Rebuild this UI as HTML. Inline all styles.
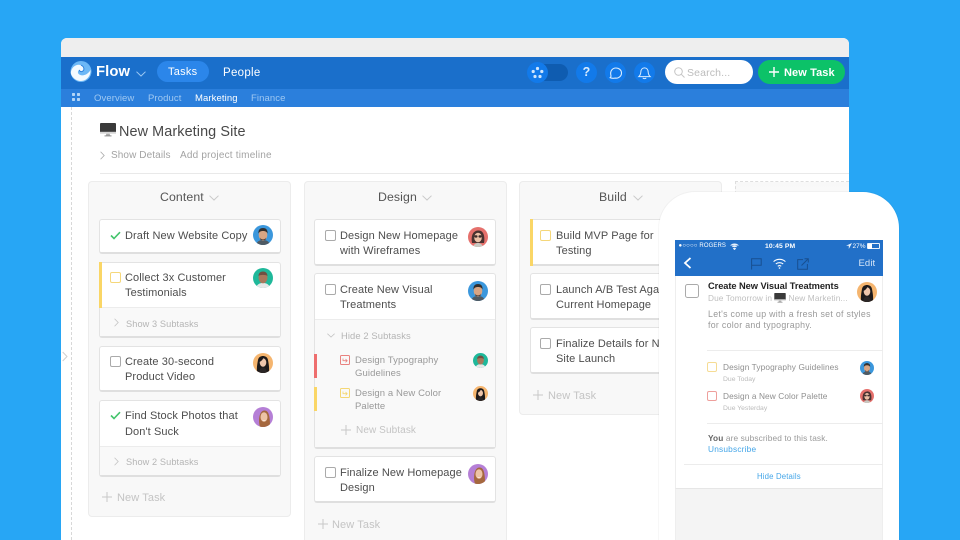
<!DOCTYPE html>
<html><head><meta charset="utf-8"><style>
html,body{margin:0;padding:0}
body{width:960px;height:540px;overflow:hidden;position:relative;background:#27a6f5;font-family:"Liberation Sans",sans-serif}
#a{position:absolute;left:0;top:0;width:960px;height:540px;overflow:hidden;filter:blur(.35px)}
.r,.t,svg.p{position:absolute;box-sizing:border-box}
.t{white-space:nowrap;line-height:14px;height:14px}
.k{font-size:11px;color:#4d4d4d;letter-spacing:.1px;margin-top:1px}
.g{font-size:10px;color:#b5b5b5;letter-spacing:.1px;margin-top:1px}
.n{font-size:11px;color:#c4c4c4;letter-spacing:.1px;margin-top:1px}
.s{font-size:9.5px;color:#999;letter-spacing:.1px;margin-top:1px}
.col{background:#f8f8f8;border:1px solid #ececec;border-radius:4px}
.c{background:#fff;border:1px solid #e3e3e3;border-bottom:2px solid #dfdfdf;border-radius:3px}
.f{background:#f9f9f9;border-top:1px solid #ececec}
.b{width:11px;height:11px;border:1px solid #aaa;border-radius:2px;background:#fff}
.y{border-color:#f5d77a}
.h{font-size:12.3px;color:#555;letter-spacing:.1px}
.w{color:#fff}
</style></head><body>
<svg width="0" height="0" style="position:absolute">
<defs>
<clipPath id="cc"><circle cx="10" cy="10" r="10"/></clipPath>
<symbol id="man" viewBox="0 0 20 20"><g clip-path="url(#cc)"><rect width="20" height="20" fill="#3b97dc"/><path d="M3 20c1-4 4-5 7-5s6 1 7 5z" fill="#4f5a63"/><ellipse cx="10" cy="10" rx="4.3" ry="5.5" fill="#d8a584"/><path d="M5.500 8.500c-.5-4 2-5.500 4.500-5.500s5 1.500 4.500 5.500c-1-2-2.500-2.500-4.500-2.500s-3.500.5-4.500 2.500z" fill="#33302e"/><path d="M7 12.500c1 2.500 5 2.500 6 0l-.5 2.500h-5z" fill="#5a4338"/></g></symbol>
<symbol id="tea" viewBox="0 0 20 20"><g clip-path="url(#cc)"><rect width="20" height="20" fill="#1fb89a"/><path d="M3 20c1-4 4-5 7-5s6 1 7 5z" fill="#e8e8e8"/><ellipse cx="10" cy="9.500" rx="4.500" ry="5.800" fill="#a8785c"/><path d="M5.500 8c0-3 2-4.500 4.500-4.500s4.500 1.500 4.500 4.500c-1.500-1.500-7.500-1.500-9 0z" fill="#6f5042"/></g></symbol>
<symbol id="asi" viewBox="0 0 20 20"><g clip-path="url(#cc)"><rect width="20" height="20" fill="#f5b56f"/><path d="M4 20c-.5-6 .5-10 1-13 .5-3 3-4 5-4s4.500 1 5 4c.5 3 1.500 7 1 13z" fill="#1e1a1a"/><ellipse cx="10" cy="9.500" rx="3.300" ry="4.300" fill="#efc6ab"/><path d="M6.500 9c.5-3 2-4.500 4-4.500-.5 2-2 3.500-4 4.500z" fill="#1e1a1a"/><path d="M7 16l3-2 3 2 1 4H6z" fill="#2b2626"/></g></symbol>
<symbol id="red" viewBox="0 0 20 20"><g clip-path="url(#cc)"><rect width="20" height="20" fill="#e5706c"/><path d="M4 16c-1-6 0-12 6-12.500s7 6.500 6 12.500z" fill="#4a3230"/><ellipse cx="10" cy="10.500" rx="3.800" ry="4.800" fill="#ecc0a6"/><rect x="6.300" y="8.300" width="3.200" height="2.300" rx="1" fill="#3b2b2b"/><rect x="10.500" y="8.300" width="3.200" height="2.300" rx="1" fill="#3b2b2b"/><path d="M5 20c1-3 3-4 5-4s4 1 5 4z" fill="#c9c9c2"/></g></symbol>
<symbol id="pur" viewBox="0 0 20 20"><g clip-path="url(#cc)"><rect width="20" height="20" fill="#b57fd6"/><path d="M7 20c-2-6-1-16 4-16.500s6 6 6 16.500z" fill="#a5683e"/><ellipse cx="11" cy="10" rx="3.500" ry="4.800" fill="#edc3a5"/><path d="M9 12.500c1 1 3 1 4 0-.5 1.800-3.500 1.800-4 0z" fill="#fff"/></g></symbol>
<symbol id="mon" viewBox="0 0 16 14"><rect x="0" y="0" width="16" height="10.500" rx="1" fill="#3a3a3a"/><rect x="0" y="8.800" width="16" height="1.900" fill="#d5d5d5"/><path d="M6.300 10.700h3.400l.4 1.800H5.900z" fill="#aaa"/><rect x="4.500" y="12.400" width="7" height="1" fill="#8d8d8d"/></symbol>
<symbol id="chv" viewBox="0 0 10 6"><path d="M.5.700 5 5 9.500.7" fill="none" stroke="currentColor" stroke-width="1"/></symbol>
<symbol id="chr" viewBox="0 0 6 10"><path d="M.7.500 5 5 .7 9.500" fill="none" stroke="currentColor" stroke-width="1"/></symbol>
<symbol id="chk" viewBox="0 0 11 9"><path d="M1 4.500 4 7.500 10 1.200" fill="none" stroke="#43c46b" stroke-width="1.600"/></symbol>
<symbol id="pls" viewBox="0 0 10 10"><path d="M5 0v10M0 5h10" fill="none" stroke="#c8c8c8" stroke-width="1"/></symbol>
<symbol id="sub" viewBox="0 0 10 10"><path d="M3 3.500v2.200h4M5.500 4 7.200 5.700 5.500 7.400" fill="none" stroke="currentColor" stroke-width=".8"/></symbol>
</defs></svg>
<div id="a">

<!-- window -->
<div class="r" style="left:61px;top:38px;width:788px;height:520px;background:#fff;border-radius:6px 6px 0 0;overflow:hidden">
  <div class="r" style="left:0;top:0;width:788px;height:19px;background:#eeeeee"></div>
  <div class="r" style="left:0;top:19px;width:788px;height:32px;background:#1a6fcb"></div>
  <div class="r" style="left:0;top:51px;width:788px;height:18px;background:#2b7fdc"></div>
</div>
<!-- dotted side -->
<div class="r" style="left:71px;top:107px;width:0;height:433px;border-left:1px dashed #d8d8d8"></div>
<svg class="p" style="left:62px;top:351px" width="6" height="11" color="#cfcfcf"><use href="#chr" width="6" height="11"/></svg>

<!-- header -->
<svg class="p" style="left:70px;top:61px" width="22" height="21" viewBox="0 0 22 21"><circle cx="11" cy="10.500" r="10.500" fill="#6db8f6"/><path d="M.8 11.500C1.500 6 6.500 2.500 11 4.200c3.500 1.300 3.800 5.300 1 6.300-1.400.5-2.600-.4-2.600-1.600-2 .8-2.100 4 .6 5 3.700 1.400 8.400-.8 10.500-5 .5 6-4 11.100-9.500 11.100-5 0-9.400-3.700-10.200-8z" fill="#fff" opacity=".92"/><path d="M11 4.200c3.500 1.300 3.800 5.300 1 6.300-1.400.5-2.600-.4-2.600-1.600" fill="none" stroke="#2b82df" stroke-width="1"/></svg>
<div class="t w" style="left:96px;top:63.500px;font-size:14.800px;font-weight:bold;line-height:16px;height:16px;letter-spacing:.1px">Flow</div>
<svg class="p" style="left:136px;top:70.500px" width="10" height="6" color="#9cc8f3"><use href="#chv" width="10" height="6"/></svg>
<div class="r" style="left:157px;top:61px;width:52px;height:21px;border-radius:11px;background:#2b86ea"></div>
<div class="t w" style="left:168px;top:65px;font-size:11px;letter-spacing:.25px">Tasks</div>
<div class="t w" style="left:223px;top:65.500px;font-size:11.500px;letter-spacing:.3px">People</div>

<div class="r" style="left:532px;top:64px;width:36px;height:17px;border-radius:9px;background:#0f5cb0"></div>
<svg class="p" style="left:527px;top:61.500px" width="21" height="21"><circle cx="10.500" cy="10.500" r="10.500" fill="#127aea"/><g fill="#cfe6fd"><circle cx="10.500" cy="6.500" r="1.600"/><circle cx="6.200" cy="9.500" r="1.600"/><circle cx="14.800" cy="9.500" r="1.600"/><circle cx="8" cy="14.500" r="1.600"/><circle cx="13" cy="14.500" r="1.600"/></g></svg>
<svg class="p" style="left:576px;top:61.500px" width="21" height="21"><circle cx="10.500" cy="10.500" r="10.500" fill="#127aea"/></svg>
<div class="t" style="left:582px;top:64.500px;width:9px;text-align:center;color:#d8ebfe;font-size:12.500px;font-weight:bold;line-height:15px;height:15px">?</div>
<svg class="p" style="left:605px;top:61.500px" width="21" height="21"><circle cx="10.500" cy="10.500" r="10.500" fill="#127aea"/><path d="M5.200 15.700c.8-.7.900-1.500.7-2.400-1.100-3.900 1.300-7.300 5-7.300 3.300 0 5.600 2.200 5.600 5 0 3.300-3 5.500-6.100 5.100-2 .4-3.700.2-5.200-.4z" fill="none" stroke="#d8ebfe" stroke-width="1.100"/></svg>
<svg class="p" style="left:634px;top:61.500px" width="21" height="21"><circle cx="10.500" cy="10.500" r="10.500" fill="#127aea"/><path d="M4.800 14.600h11.400c-1.400-1.300-1.900-2.600-2-4.400-.1-2.500-1.500-4.300-3.700-4.300s-3.600 1.800-3.700 4.300c-.1 1.800-.6 3.100-2 4.400zM8.800 15.800c.5 1.100 2.900 1.100 3.400 0" fill="none" stroke="#d8ebfe" stroke-width="1"/></svg>

<div class="r" style="left:665px;top:60px;width:88px;height:24px;border-radius:12px;background:#fff"></div>
<svg class="p" style="left:674px;top:66.500px" width="11" height="11"><circle cx="4.500" cy="4.500" r="3.800" fill="none" stroke="#c4c4c4"/><path d="M7.300 7.300 10.500 10.500" stroke="#c4c4c4"/></svg>
<div class="t" style="left:687px;top:65.500px;font-size:10.500px;color:#bcbcbc;letter-spacing:.15px">Search...</div>
<div class="r" style="left:758px;top:60px;width:87px;height:24px;border-radius:12px;background:#0cc268"></div>
<svg class="p" style="left:769px;top:67px" width="10" height="10"><path d="M5 0v10M0 5h10" stroke="#fff" stroke-width="1.400"/></svg>
<div class="t w" style="left:784px;top:65.500px;font-size:11px;letter-spacing:.1px;font-weight:bold">New Task</div>

<!-- subnav -->
<svg class="p" style="left:72px;top:92.500px" width="8" height="8"><g fill="#b4d6f7"><rect width="3" height="3" rx=".7"/><rect x="5" width="3" height="3" rx=".7"/><rect y="5" width="3" height="3" rx=".7"/><rect x="5" y="5" width="3" height="3" rx=".7"/></g></svg>
<div class="t" style="left:94px;top:92px;font-size:9.500px;color:#9fc8f2;letter-spacing:.1px">Overview</div>
<div class="t" style="left:148px;top:92px;font-size:9.500px;color:#9fc8f2;letter-spacing:.1px">Product</div>
<div class="t w" style="left:195px;top:92px;font-size:9.500px;letter-spacing:.1px">Marketing</div>
<div class="t" style="left:251px;top:92px;font-size:9.500px;color:#9fc8f2;letter-spacing:.1px">Finance</div>

<!-- title -->
<svg class="p" style="left:100px;top:123px" width="16" height="14"><use href="#mon" width="16" height="14"/></svg>
<div class="t" style="left:119px;top:124px;font-size:14.400px;color:#484848;line-height:16px;height:16px;letter-spacing:.1px">New Marketing Site</div>
<svg class="p" style="left:100px;top:150.500px" width="5" height="9" color="#aaa"><use href="#chr" width="5" height="9"/></svg>
<div class="t g" style="left:111px;top:148px;color:#a3a3a3">Show Details</div>
<div class="t g" style="left:180px;top:148px;color:#a3a3a3;letter-spacing:.2px">Add project timeline</div>
<div class="r" style="left:100px;top:173px;width:749px;height:1px;background:#e9e9e9"></div>

<!-- COLUMN 1 -->
<div class="r col" style="left:88px;top:181px;width:203px;height:336px"></div>
<div class="t h" style="left:160px;top:190px">Content</div>
<svg class="p" style="left:209px;top:195px" width="10" height="6" color="#c9c9c9"><use href="#chv" width="10" height="6"/></svg>

<div class="r c" style="left:99px;top:219px;width:182px;height:35px"></div>
<svg class="p" style="left:110px;top:231px" width="11" height="9"><use href="#chk" width="11" height="9"/></svg>
<div class="t k" style="left:125px;top:227.500px">Draft New Website Copy</div>
<svg class="p" style="left:253px;top:225px" width="20" height="20"><use href="#man" width="20" height="20"/></svg>

<div class="r c" style="left:99px;top:262px;width:182px;height:76px"></div>
<div class="r f" style="left:100px;top:307px;width:180px;height:29px"></div>
<div class="r" style="left:99px;top:262px;width:3px;height:46px;background:#fad666"></div>
<div class="r b y" style="left:110px;top:272px"></div>
<div class="t k" style="left:125px;top:269.500px">Collect 3x Customer</div>
<div class="t k" style="left:125px;top:284.500px">Testimonials</div>
<svg class="p" style="left:253px;top:268px" width="20" height="20"><use href="#tea" width="20" height="20"/></svg>
<svg class="p" style="left:114px;top:318px" width="5" height="9" color="#c5c5c5"><use href="#chr" width="5" height="9"/></svg>
<div class="t g" style="left:126px;top:315.500px;font-size:9.200px">Show 3 Subtasks</div>

<div class="r c" style="left:99px;top:346px;width:182px;height:46px"></div>
<div class="r b" style="left:110px;top:356px"></div>
<div class="t k" style="left:125px;top:353.500px">Create 30-second</div>
<div class="t k" style="left:125px;top:369px">Product Video</div>
<svg class="p" style="left:253px;top:352.500px" width="20" height="20"><use href="#asi" width="20" height="20"/></svg>

<div class="r c" style="left:99px;top:400px;width:182px;height:77px"></div>
<div class="r f" style="left:100px;top:446px;width:180px;height:29px"></div>
<svg class="p" style="left:110px;top:411px" width="11" height="9"><use href="#chk" width="11" height="9"/></svg>
<div class="t k" style="left:125px;top:407.500px">Find Stock Photos that</div>
<div class="t k" style="left:125px;top:423.500px">Don't Suck</div>
<svg class="p" style="left:253px;top:407px" width="20" height="20"><use href="#pur" width="20" height="20"/></svg>
<svg class="p" style="left:114px;top:456.500px" width="5" height="9" color="#c5c5c5"><use href="#chr" width="5" height="9"/></svg>
<div class="t g" style="left:126px;top:454px;font-size:9.200px">Show 2 Subtasks</div>

<svg class="p" style="left:102px;top:492px" width="10" height="10"><use href="#pls" width="10" height="10"/></svg>
<div class="t n" style="left:117px;top:489.500px">New Task</div>

<!-- COLUMN 2 -->
<div class="r col" style="left:304px;top:181px;width:203px;height:380px"></div>
<div class="t h" style="left:378px;top:190px">Design</div>
<svg class="p" style="left:422px;top:195px" width="10" height="6" color="#c9c9c9"><use href="#chv" width="10" height="6"/></svg>

<div class="r c" style="left:314px;top:219px;width:182px;height:47px"></div>
<div class="r b" style="left:325px;top:230px"></div>
<div class="t k" style="left:340px;top:227.500px">Design New Homepage</div>
<div class="t k" style="left:340px;top:242.500px">with Wireframes</div>
<svg class="p" style="left:468px;top:227px" width="20" height="20"><use href="#red" width="20" height="20"/></svg>

<div class="r c" style="left:314px;top:273px;width:182px;height:176px"></div>
<div class="r f" style="left:315px;top:319px;width:180px;height:128px"></div>
<div class="r b" style="left:325px;top:284px"></div>
<div class="t k" style="left:340px;top:281.500px">Create New Visual</div>
<div class="t k" style="left:340px;top:296.500px">Treatments</div>
<svg class="p" style="left:468px;top:281px" width="20" height="20"><use href="#man" width="20" height="20"/></svg>
<svg class="p" style="left:327px;top:332.500px" width="8" height="5" color="#c5c5c5"><use href="#chv" width="8" height="5"/></svg>
<div class="t g" style="left:341px;top:327.500px;font-size:9.400px">Hide 2 Subtasks</div>

<div class="r" style="left:314px;top:354px;width:3px;height:24px;background:#ee6e6e"></div>
<div class="r" style="left:340px;top:354.500px;width:10px;height:10px;border:1px solid #e9827f;border-radius:1.500px"></div>
<svg class="p" style="left:340px;top:354.500px" width="10" height="10" color="#e9827f"><use href="#sub" width="10" height="10"/></svg>
<div class="t s" style="left:355px;top:352.500px">Design Typography</div>
<div class="t s" style="left:355px;top:365.500px">Guidelines</div>
<svg class="p" style="left:472.500px;top:353px" width="15" height="15"><use href="#tea" width="15" height="15"/></svg>

<div class="r" style="left:314px;top:387px;width:3px;height:24px;background:#fad666"></div>
<div class="r" style="left:340px;top:388px;width:10px;height:10px;border:1px solid #f4d774;border-radius:1.500px"></div>
<svg class="p" style="left:340px;top:388px" width="10" height="10" color="#f4d774"><use href="#sub" width="10" height="10"/></svg>
<div class="t s" style="left:355px;top:386px">Design a New Color</div>
<div class="t s" style="left:355px;top:399px">Palette</div>
<svg class="p" style="left:472.500px;top:386px" width="15" height="15"><use href="#asi" width="15" height="15"/></svg>
<svg class="p" style="left:341px;top:425px" width="10" height="10"><use href="#pls" width="10" height="10"/></svg>
<div class="t n" style="left:356px;top:422.500px;font-size:10px">New Subtask</div>

<div class="r c" style="left:314px;top:456px;width:182px;height:47px"></div>
<div class="r b" style="left:325px;top:467px"></div>
<div class="t k" style="left:340px;top:464.500px">Finalize New Homepage</div>
<div class="t k" style="left:340px;top:480px">Design</div>
<svg class="p" style="left:468px;top:464px" width="20" height="20"><use href="#pur" width="20" height="20"/></svg>
<svg class="p" style="left:318px;top:519px" width="10" height="10"><use href="#pls" width="10" height="10"/></svg>
<div class="t n" style="left:332px;top:516.500px">New Task</div>

<!-- COLUMN 3 -->
<div class="r col" style="left:519px;top:181px;width:203px;height:234px"></div>
<div class="t h" style="left:599px;top:190px">Build</div>
<svg class="p" style="left:633px;top:195px" width="10" height="6" color="#c9c9c9"><use href="#chv" width="10" height="6"/></svg>

<div class="r c" style="left:530px;top:219px;width:182px;height:47px"></div>
<div class="r" style="left:530px;top:219px;width:3px;height:47px;background:#fad666"></div>
<div class="r b y" style="left:540px;top:230px"></div>
<div class="t k" style="left:556px;top:227.500px">Build MVP Page for</div>
<div class="t k" style="left:556px;top:242.500px">Testing</div>

<div class="r c" style="left:530px;top:273px;width:182px;height:47px"></div>
<div class="r b" style="left:540px;top:284px"></div>
<div class="t k" style="left:556px;top:281.500px">Launch A/B Test Against</div>
<div class="t k" style="left:556px;top:296.500px">Current Homepage</div>

<div class="r c" style="left:530px;top:327px;width:182px;height:47px"></div>
<div class="r b" style="left:540px;top:338px"></div>
<div class="t k" style="left:556px;top:335.500px">Finalize Details for New</div>
<div class="t k" style="left:556px;top:350.500px">Site Launch</div>
<svg class="p" style="left:533px;top:390px" width="10" height="10"><use href="#pls" width="10" height="10"/></svg>
<div class="t n" style="left:548px;top:387.500px">New Task</div>

<!-- empty dashed column -->
<div class="r" style="left:735px;top:181px;width:114px;height:60px;border:1px dashed #dedede;border-right:0;border-bottom:0;background:linear-gradient(#f8f8f8,#fff)"></div>

<!-- PHONE -->
<div class="r" style="left:659px;top:192px;width:240px;height:400px;background:#fff;border-radius:36px;box-shadow:0 0 0 1px rgba(0,0,0,.03)"></div>
<div class="r" style="left:675px;top:240px;width:208px;height:300px;background:#fff;border-left:1px solid #eeeeee;border-right:1px solid #eeeeee"></div>
<div class="r" style="left:675px;top:240px;width:208px;height:36px;background:#2270c8"></div>
<div class="t w" style="left:678.500px;top:239px;font-size:6px;letter-spacing:.1px"><span style="letter-spacing:.2px;font-size:6px">●○○○○</span> ROGERS</div>
<svg class="p" style="left:730px;top:242.500px" width="9" height="7" viewBox="0 0 9 7"><path d="M.5 2.500c2.300-2.200 5.700-2.200 8 0M2 4c1.500-1.300 3.500-1.300 5 0M4.500 6.800 3.300 5.400c.7-.5 1.700-.5 2.400 0z" fill="#e8f1fb" stroke="#e8f1fb" stroke-width=".6"/></svg>
<div class="t w" style="left:765px;top:239.500px;font-size:6.800px;font-weight:bold;letter-spacing:.1px">10:45 PM</div>
<svg class="p" style="left:846px;top:243px" width="6" height="6"><path d="M6 0 0 2.800h2.800V6z" fill="#eaf2fb"/></svg>
<div class="t w" style="left:852.500px;top:239.500px;font-size:6.500px">27%</div>
<div class="r" style="left:867px;top:243px;width:13px;height:6px;border:.7px solid #e8f1fb;border-radius:1px"></div>
<div class="r" style="left:867.500px;top:243.500px;width:4px;height:5px;background:#fff"></div>
<svg class="p" style="left:683px;top:257px" width="10" height="12" viewBox="0 0 10 12"><path d="M7.500 1 2 6l5.500 5" fill="none" stroke="#fff" stroke-width="1.800"/></svg>
<svg class="p" style="left:751px;top:258px" width="11" height="12" viewBox="0 0 11 12"><path d="M.6 11.500V.8h9.600v6.500H.6" fill="none" stroke="#184f90" stroke-width="1"/></svg>
<svg class="p" style="left:773px;top:258px" width="13" height="11" viewBox="0 0 13 11"><g fill="none" stroke="#fff" stroke-width="1.100"><path d="M.6 3.600c3.300-3 8.500-3 11.800 0M2.800 6c2-1.800 5.400-1.800 7.400 0M4.800 8.300c1-.8 2.400-.8 3.400 0"/></g><circle cx="6.500" cy="10" r=".8" fill="#fff"/></svg>
<svg class="p" style="left:797px;top:257.500px" width="12" height="12" viewBox="0 0 12 12"><path d="M6 1.600H.7v9.700h9.700V6M4.500 7.500 11 1M7.500.7h3.800v3.800" fill="none" stroke="#184f90" stroke-width="1"/></svg>
<div class="t" style="left:858.500px;top:257px;font-size:9.500px;color:#d5e5f7;letter-spacing:.1px">Edit</div>

<div class="r b" style="left:685px;top:284px;width:14px;height:14px;border:1.200px solid #aaa;border-radius:2.500px"></div>
<div class="t" style="left:708px;top:279px;font-size:9.300px;color:#222;font-weight:bold;letter-spacing:-.07px">Create New Visual Treatments</div>
<div class="t" style="left:708px;top:291px;font-size:8.300px;color:#c0c0c0;letter-spacing:.1px">Due Tomorrow in</div>
<svg class="p" style="left:773.500px;top:293px" width="12" height="10"><use href="#mon" width="12" height="10"/></svg>
<div class="t" style="left:788.500px;top:291px;font-size:8.300px;color:#c0c0c0;letter-spacing:.1px">New Marketin...</div>
<div class="t" style="left:708px;top:307px;font-size:8.800px;color:#999;letter-spacing:.3px">Let's come up with a fresh set of styles</div>
<div class="t" style="left:708px;top:318px;font-size:8.800px;color:#999;letter-spacing:.3px">for color and typography.</div>
<svg class="p" style="left:857px;top:282px" width="20" height="20"><use href="#asi" width="20" height="20"/></svg>
<div class="r" style="left:707px;top:350px;width:176px;height:1px;background:#ececec"></div>

<div class="r" style="left:707px;top:362px;width:10px;height:10px;border:1px solid #f6dc94;border-radius:2px"></div>
<div class="t" style="left:723px;top:359.500px;font-size:8.300px;color:#8f8f8f;letter-spacing:.1px">Design Typography Guidelines</div>
<div class="t" style="left:723px;top:372.500px;font-size:6.800px;color:#bbb">Due Today</div>
<svg class="p" style="left:860px;top:361px" width="14" height="14"><use href="#man" width="14" height="14"/></svg>

<div class="r" style="left:707px;top:391px;width:10px;height:10px;border:1px solid #ee9f9c;border-radius:2px"></div>
<div class="t" style="left:723px;top:389px;font-size:8.300px;color:#8f8f8f;letter-spacing:.1px">Design a New Color Palette</div>
<div class="t" style="left:723px;top:401.500px;font-size:6.800px;color:#bbb">Due Yesterday</div>
<svg class="p" style="left:860px;top:389px" width="14" height="14"><use href="#red" width="14" height="14"/></svg>

<div class="r" style="left:707px;top:423px;width:176px;height:1px;background:#ececec"></div>
<div class="t" style="left:708px;top:430.500px;font-size:8.300px;color:#999;letter-spacing:.12px"><b style="color:#666">You</b> are subscribed to this task.</div>
<div class="t" style="left:708px;top:442px;font-size:8.300px;color:#45a6e8;letter-spacing:.2px">Unsubscribe</div>
<div class="r" style="left:684px;top:464px;width:199px;height:1px;background:#ececec"></div>
<div class="t" style="left:757px;top:469.500px;font-size:7.800px;color:#45a6e8;letter-spacing:.15px">Hide Details</div>
<div class="r" style="left:675px;top:488px;width:208px;height:52px;background:#f4f4f4;border-top:1px solid #e6e6e6;border-left:1px solid #eeeeee;border-right:1px solid #eeeeee"></div>

</div>
</body></html>
